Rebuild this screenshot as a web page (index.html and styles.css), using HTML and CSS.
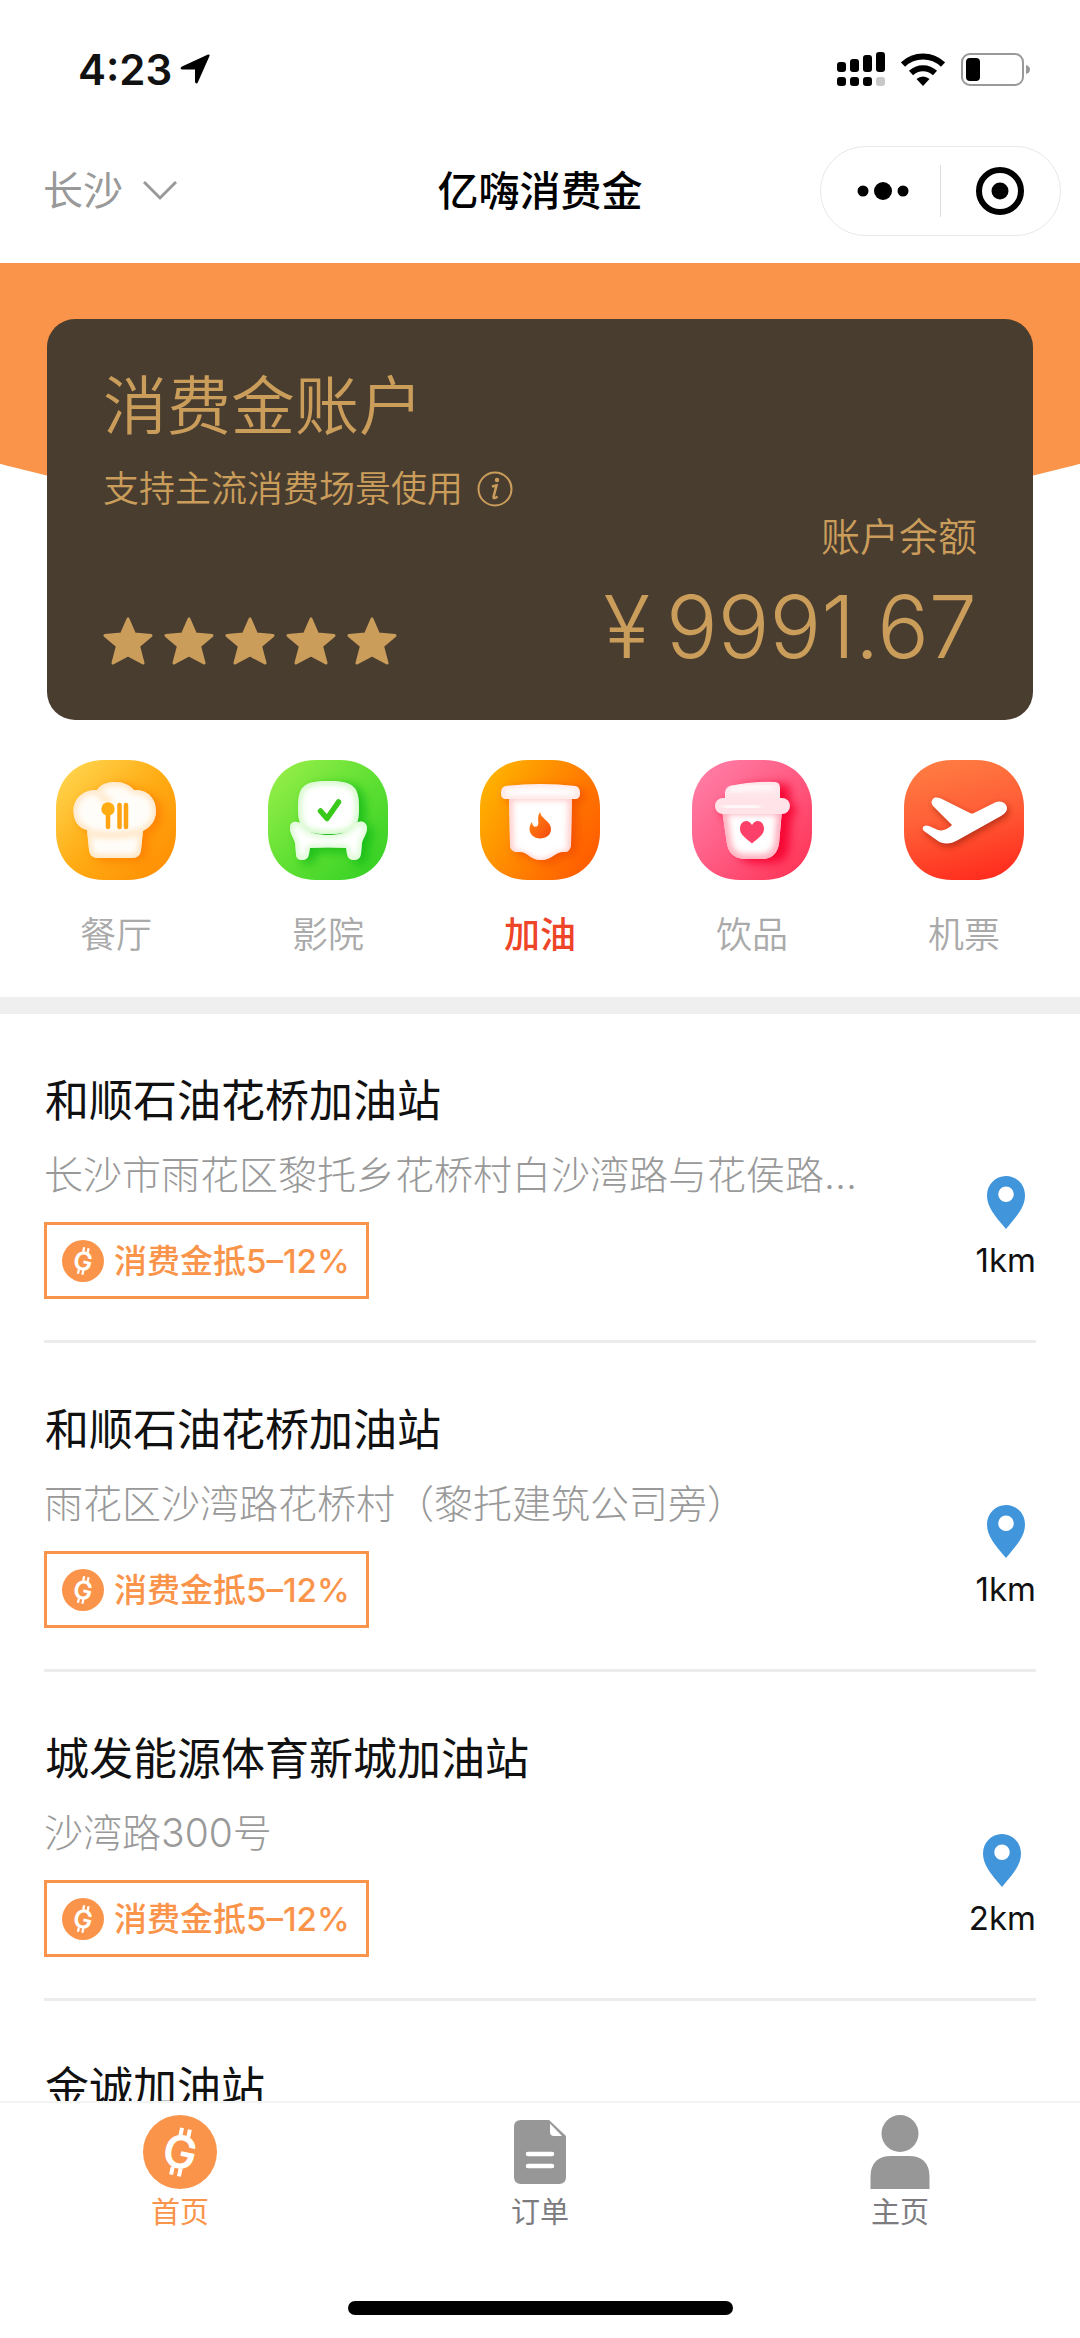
FILE: index.html
```html
<!DOCTYPE html>
<html lang="zh-CN">
<head>
<meta charset="utf-8">
<meta name="viewport" content="width=device-width, initial-scale=1">
<title>亿嗨消费金</title>
<link rel="stylesheet" href="styles.css">
</head>
<body>
<svg class="sprite" aria-hidden="true">
  <defs>
    <symbol id="coin" viewBox="0 0 74 74">
      <circle cx="37" cy="37" r="37" fill="#fa944a"/>
      <g transform="rotate(12 37 37)">
        <text class="coin-letter" x="37" y="53" text-anchor="middle">G</text>
        <path d="M34 13v8M42 13v8M33 53v8M41 53v8" stroke="#fff" stroke-width="4" fill="none"/>
      </g>
    </symbol>
    <symbol id="pin" viewBox="0 0 38 53">
      <path fill="#4095db" fill-rule="evenodd" d="M19 0C8.500 0 0 8.500 0 19.500C0 31 8 40 19 53C30 40 38 31 38 19.500C38 8.500 29.500 0 19 0ZM19 10.500a7.800 7.800 0 1 1 0 15.600a7.800 7.800 0 0 1 0-15.600Z"/>
    </symbol>
    <symbol id="star" viewBox="0 0 50 48">
      <path d="M25 2L31.500 17L48 18.500L35.500 29L40 46L25 38L10 46L14.500 29L2 18.500L18.500 17Z" fill="#cb9d5b" stroke="#cb9d5b" stroke-width="3" stroke-linejoin="round"/>
    </symbol>
    <clipPath id="tile"><path d="M0 48C0 20 20 0 48 0H72C100 0 120 20 120 48V72C120 100 100 120 72 120H48C20 120 0 100 0 72Z"/></clipPath>
    <filter id="soft" x="-30%" y="-30%" width="160%" height="160%"><feGaussianBlur stdDeviation="5"/></filter>
    <filter id="soft-inner" x="-30%" y="-30%" width="160%" height="160%"><feGaussianBlur stdDeviation="3"/></filter>
  </defs>
</svg>

<div class="app">
  <header>
    <div class="status">
      <span class="time">4:23</span>
      <svg class="arrow" viewBox="0 0 30 30"><path d="M28 0.500Q30 0 29.500 2L18 28Q16.500 31 15 28V15.500H2Q-1 14.500 2 12.500Z"/></svg>
      <div class="status-icons">
        <svg width="48" height="34" viewBox="0 0 48 34">
          <rect x="0" y="10" width="9" height="10" rx="3"/><rect x="13" y="7" width="9" height="13" rx="3"/><rect x="26" y="3" width="9" height="17" rx="3"/><rect x="39" y="0" width="9" height="20" rx="3"/>
          <rect x="0" y="25" width="9" height="9" rx="3"/><rect x="13" y="25" width="9" height="9" rx="3"/><rect x="26" y="25" width="9" height="9" rx="3"/><rect x="39" y="25" width="9" height="9" rx="3" fill="#c8c8c8"/>
        </svg>
        <svg width="44" height="33" viewBox="0 0 44 33">
          <path d="M2 11.500A29 29 0 0 1 42 11.500M10 20A17.500 17.500 0 0 1 34 20" fill="none" stroke="#000" stroke-width="6"/>
          <path d="M22 33L15.500 26A9.500 9.500 0 0 1 28.500 26Z"/>
        </svg>
        <svg width="69" height="33" viewBox="0 0 69 33">
          <rect x="1" y="1" width="61" height="31" rx="8" fill="none" stroke="#999" stroke-width="2"/>
          <rect x="5" y="5" width="14" height="23" rx="4"/><path d="M65 12Q69 13 69 16.500Q69 20 65 21Z" fill="#999"/>
        </svg>
      </div>
    </div>
    <nav class="nav">
      <button class="city" type="button">长沙
        <svg width="34" height="20" viewBox="0 0 34 20"><path d="M1 1L17 17L33 1" fill="none" stroke="#999" stroke-width="3"/></svg>
      </button>
      <h1 class="title">亿嗨消费金</h1>
      <div class="capsule">
        <button type="button" aria-label="更多"><svg width="52" height="18" viewBox="0 0 52 18"><circle cx="6" cy="9" r="5.500"/><circle cx="26" cy="9" r="9"/><circle cx="46" cy="9" r="5.500"/></svg></button>
        <button type="button" aria-label="关闭"><svg width="48" height="48" viewBox="0 0 48 48"><circle cx="24" cy="24" r="21" fill="none" stroke="#000" stroke-width="6"/><circle cx="24" cy="24" r="8.500"/></svg></button>
      </div>
    </nav>
  </header>

  <section class="hero">
    <div class="card">
      <h2 class="card-title">消费金账户</h2>
      <p class="card-sub">支持主流消费场景使用
        <svg width="36" height="36" viewBox="0 0 36 36"><circle cx="18" cy="18" r="16.500" fill="none" stroke="#cb9d5b" stroke-width="2"/><circle cx="20" cy="9" r="2.200" fill="#cb9d5b"/><path d="M15 15.500L19.500 14.500L16.500 26Q16.500 28.500 20.500 25.500" fill="none" stroke="#cb9d5b" stroke-width="2.500"/></svg>
      </p>
      <div class="card-row">
        <div class="stars">
          <svg><use href="#star"/></svg><svg><use href="#star"/></svg><svg><use href="#star"/></svg><svg><use href="#star"/></svg><svg><use href="#star"/></svg>
        </div>
        <div class="balance">
          <p class="balance-label">账户余额</p>
          <p class="amount"><span>¥</span><span>9991.67</span></p>
        </div>
      </div>
    </div>
  </section>

  <nav class="services">
    <a href="#food">
      <svg viewBox="0 0 120 120">
        <defs>
          <linearGradient id="g1" x1="0" y1="0" x2="1" y2="1"><stop offset="0" stop-color="#ffdb57"/><stop offset=".5" stop-color="#ffac14"/><stop offset="1" stop-color="#ff8a00"/></linearGradient>
          <path id="hat" d="M31 70C22 68 17.500 60 17.500 51C17.500 38 28 29.500 41 30C45 24 52 22 59 22C67 22 74 25 78 30C91 29 100 38 100 51C100 60 95 67 87 71L85 90Q84 98 76 98H42Q34 98 33 90Z"/>
          <clipPath id="hat-clip"><use href="#hat"/></clipPath>
        </defs>
        <g clip-path="url(#tile)">
          <rect width="120" height="120" fill="url(#g1)"/>
          <use href="#hat" x="6" y="3" fill="#ff7d00" filter="url(#soft)" opacity=".8"/>
          <use href="#hat" fill="#fffdf9"/>
          <g clip-path="url(#hat-clip)"><use href="#hat" fill="none" stroke="#ffdcae" stroke-width="5" filter="url(#soft-inner)"/><path d="M34 73Q59 78 85 72M43 32Q48 42 55 40" fill="none" stroke="#ffdfb6" stroke-width="5" filter="url(#soft-inner)"/></g>
          <path d="M52 52V67M63.500 45V67M70 45V67" stroke="#ffa313" stroke-width="4.500" stroke-linecap="round"/><circle cx="52" cy="49" r="6.700" fill="#ffad12"/>
        </g>
      </svg>
      <span>餐厅</span>
    </a>
    <a href="#cinema">
      <svg viewBox="0 0 120 120">
        <defs>
          <linearGradient id="g2" x1="0" y1="0" x2="1" y2="1"><stop offset="0" stop-color="#9df04a"/><stop offset=".5" stop-color="#61e034"/><stop offset="1" stop-color="#30ce22"/></linearGradient>
          <path id="back" d="M30 48C30 27 35 21 60 21C86 21 91 27 91 48C91 68 86 74 60 74C35 74 30 68 30 48Z"/>
          <path id="seat" d="M22 68C22 60 31 60 36 67C40 73 50 75 60.500 75C71 75 81 73 86 65C91 59 99 61 99 68C99 74 95 78 94 83L93 94Q92 100 86 100Q80 100 79 94L78 88Q60 87 42 88L41 94Q40 100 34 100Q28 100 28 94L27 83C26 78 22 74 22 68Z"/>
          <clipPath id="seat-clip"><use href="#seat"/></clipPath><clipPath id="back-clip"><use href="#back"/></clipPath>
        </defs>
        <g clip-path="url(#tile)">
          <rect width="120" height="120" fill="url(#g2)"/>
          <g filter="url(#soft)" fill="#0fb812" opacity=".8"><use href="#back" x="6" y="3"/><use href="#seat" x="6" y="4"/></g>
          <use href="#back" fill="#fff"/><g clip-path="url(#back-clip)"><use href="#back" fill="none" stroke="#b6f4a4" stroke-width="4" filter="url(#soft-inner)"/></g>
          <use href="#seat" fill="#fff"/><g clip-path="url(#seat-clip)"><use href="#seat" fill="none" stroke="#b6f4a4" stroke-width="3" filter="url(#soft-inner)"/></g>
          <path d="M52.500 51L59 58.500L70.500 42" fill="none" stroke="#38c91b" stroke-width="5.500" stroke-linecap="round" stroke-linejoin="round"/>
        </g>
      </svg>
      <span>影院</span>
    </a>
    <a href="#fuel" class="active" aria-current="true">
      <svg viewBox="0 0 120 120">
        <defs>
          <linearGradient id="g3" x1="0" y1=".2" x2="1" y2=".8"><stop offset="0" stop-color="#ffb300"/><stop offset=".55" stop-color="#ff8100"/><stop offset="1" stop-color="#ff5a00"/></linearGradient>
          <linearGradient id="flame" x1="0" y1="0" x2="1" y2="1"><stop offset="0" stop-color="#ff8a12"/><stop offset="1" stop-color="#f6480d"/></linearGradient>
          <path id="banner" d="M29 34H92L91 85Q90 93 83 92C75 92 72 100 61 100C50 100 48 92 40 92Q30 93 30 85Z"/>
          <path id="bar" d="M26 26Q60 22 95 26Q100 27 100 33Q100 39 95 39H26Q21 39 21 33Q21 27 26 26Z"/>
          <clipPath id="banner-clip"><use href="#banner"/></clipPath><clipPath id="bar-clip"><use href="#bar"/></clipPath>
        </defs>
        <g clip-path="url(#tile)">
          <rect width="120" height="120" fill="url(#g3)"/>
          <g filter="url(#soft)" fill="#f04a00" opacity=".75"><use href="#banner" x="6" y="3"/><use href="#bar" x="5" y="3"/></g>
          <use href="#banner" fill="#fff"/><g clip-path="url(#banner-clip)"><use href="#banner" y="3" fill="none" stroke="#ffc3c0" stroke-width="6" filter="url(#soft-inner)"/></g>
          <use href="#bar" fill="#fff"/><g clip-path="url(#bar-clip)"><use href="#bar" fill="none" stroke="#ffc9c6" stroke-width="3" filter="url(#soft-inner)"/></g>
          <path d="M60 52C61 59 71 61 71 69C71 75 66 78.500 60 78.500C54 78.500 49.500 74 49.500 69C49.500 66 51 63 52 62C52 66 55 68 57.500 66C60 63 56 58 60 52Z" fill="url(#flame)"/>
        </g>
      </svg>
      <span>加油</span>
    </a>
    <a href="#drinks">
      <svg viewBox="0 0 120 120">
        <defs>
          <linearGradient id="g4" x1="0" y1="0" x2="1" y2="1"><stop offset="0" stop-color="#ff83ab"/><stop offset=".5" stop-color="#ff5b83"/><stop offset="1" stop-color="#ff2e50"/></linearGradient>
          <path id="cup" d="M30 50H90L87 84Q84 99 70 99H54Q38 99 35 84Z"/>
          <path id="lid" d="M33 42V33Q33 28 38 26Q60 21 83 22Q88 22 88 28V42Z"/>
          <rect id="rim" x="23" y="38" width="75" height="16" rx="8"/>
          <clipPath id="cup-clip"><use href="#cup"/></clipPath>
        </defs>
        <g clip-path="url(#tile)">
          <rect width="120" height="120" fill="url(#g4)"/>
          <g filter="url(#soft)" fill="#f6002d" opacity=".9"><use href="#lid" x="10" y="2"/><use href="#rim" x="6" y="4"/><use href="#cup" x="10" y="4"/></g>
          <use href="#cup" fill="#fff"/><g clip-path="url(#cup-clip)"><use href="#cup" fill="none" stroke="#ffabba" stroke-width="9" filter="url(#soft-inner)"/></g>
          <use href="#lid" fill="#ffe6eb"/><path d="M38 31Q60 25 82 27" stroke="#fff" stroke-width="5" fill="none" filter="url(#soft-inner)"/>
          <use href="#rim" fill="#ffe3e9"/><path d="M31 46Q50 48 68 46" fill="none" stroke="#fff" stroke-width="7" filter="url(#soft-inner)"/>
          <path d="M60 65C56 58 48 61 48 69C48 75 55 79 60 83.500C65 79 72 75 72 69C72 61 64 58 60 65Z" fill="#fc4069"/>
        </g>
      </svg>
      <span>饮品</span>
    </a>
    <a href="#flights">
      <svg viewBox="0 0 120 120">
        <defs>
          <linearGradient id="g5" x1=".35" y1="0" x2=".6" y2="1"><stop offset="0" stop-color="#ff7b42"/><stop offset=".45" stop-color="#ff5f37"/><stop offset="1" stop-color="#ff2d1e"/></linearGradient>
          <path id="plane" d="M29 39C31 36 36 38 38 39L66 53Q68 54 70 53L92 42C98 40 103 44 103 48C103 52 100 54 97 56L54 80C46 85 38 84 34 81L20 71C17 68 20 64 25 66L34 70Q41 72 48 65L30 47C27 44 27 41 29 39Z"/>
        </defs>
        <g clip-path="url(#tile)">
          <rect width="120" height="120" fill="url(#g5)"/>
          <use href="#plane" x="2" y="3" fill="#97200d" filter="url(#soft-inner)" opacity=".65"/>
          <use href="#plane" fill="#fff"/>
        </g>
      </svg>
      <span>机票</span>
    </a>
  </nav>

  <main class="list">
    <article class="item">
      <div class="info">
        <h3>和顺石油花桥加油站</h3>
        <p class="address">长沙市雨花区黎托乡花桥村白沙湾路与花侯路…</p>
        <span class="tag"><svg><use href="#coin"/></svg>消费金抵5–12%</span>
      </div>
      <div class="distance"><svg><use href="#pin"/></svg>1km</div>
    </article>
    <article class="item">
      <div class="info">
        <h3>和顺石油花桥加油站</h3>
        <p class="address">雨花区沙湾路花桥村（黎托建筑公司旁）</p>
        <span class="tag"><svg><use href="#coin"/></svg>消费金抵5–12%</span>
      </div>
      <div class="distance"><svg><use href="#pin"/></svg>1km</div>
    </article>
    <article class="item">
      <div class="info">
        <h3>城发能源体育新城加油站</h3>
        <p class="address">沙湾路300号</p>
        <span class="tag"><svg><use href="#coin"/></svg>消费金抵5–12%</span>
      </div>
      <div class="distance"><svg><use href="#pin"/></svg>2km</div>
    </article>
    <article class="item">
      <div class="info">
        <h3>金诚加油站</h3>
      </div>
    </article>
  </main>

  <footer class="tabbar">
    <nav class="tabs">
      <a href="#home" class="active" aria-current="page"><svg viewBox="0 0 74 74"><use href="#coin"/></svg>首页</a>
      <a href="#orders"><svg viewBox="0 0 74 74"><path fill="#979797" d="M18 5H46L63 21V62Q63 69 56 69H18Q11 69 11 62V12Q11 5 18 5Z"/><path fill="#fff" d="M47 8.500L59 21H51Q47 21 47 17Z"/><path d="M25 39H49M25 51H49" stroke="#fff" stroke-width="4.500" stroke-linecap="round"/></svg>订单</a>
      <a href="#me"><svg viewBox="0 0 74 74"><g fill="#979797"><circle cx="37" cy="18.500" r="18.500"/><path d="M7.500 74V62Q7.500 41 28.500 41H45.500Q66.500 41 66.500 62V74Z"/></g></svg>主页</a>
    </nav>
    <div class="home-indicator"></div>
  </footer>
</div>
</body>
</html>
```
FILE: styles.css
```css
* { box-sizing: border-box; }

body, h1, h2, h3, p { margin: 0; font-weight: 400; }

body {
  background: #fff;
  color: #111;
  font-family: Inter, "Noto Sans CJK SC", sans-serif;
}

a { color: inherit; text-decoration: none; }

button {
  border: 0;
  padding: 0;
  background: none;
  color: inherit;
  font: inherit;
}

svg { display: block; flex: none; }

.sprite { position: absolute; width: 0; height: 0; }

.coin-letter { font: 600 45px Inter, sans-serif; fill: #fff; }

.app {
  display: flex;
  flex-direction: column;
  height: 100vh;
}

/* status bar */
.status {
  display: flex;
  align-items: center;
  height: 138px;
  padding: 0 50px 0 78px;
}

.time { font-size: 42px; font-weight: 600; }
.arrow { width: 30px; height: 30px; margin-left: 8px; }

.status-icons {
  display: flex;
  align-items: center;
  gap: 16px;
  margin-left: auto;
}

/* navigation */
.nav {
  display: grid;
  grid-template-columns: 1fr auto 1fr;
  align-items: center;
  height: 106px;
  margin-bottom: 19px;
  padding: 0 19px;
}

.city {
  display: flex;
  align-items: center;
  gap: 20px;
  margin-left: 24px;
  color: #999;
  font-size: 40px;
  line-height: 56px;
}

.title {
  color: #000;
  font-size: 41px;
  font-weight: 500;
  line-height: 56px;
}

.capsule {
  display: flex;
  justify-self: end;
  width: 241px;
  height: 90px;
  padding: 18px 0;
  border: 1px solid #e8e8e8;
  border-radius: 45px;
}

.capsule button {
  display: flex;
  width: 50%;
  align-items: center;
  justify-content: center;
}

.capsule button:first-child { padding-left: 6px; border-right: 1px solid #ddd; }

/* account card */
.hero {
  position: relative;
  padding: 56px 47px 0;
}

.hero::before {
  content: "";
  position: absolute;
  inset: 0;
  background: #fa944a;
  clip-path: ellipse(77% 264px at 50% 0);
}

.card {
  position: relative;
  padding: 47px 56px 45px;
  border-radius: 28px;
  background: #493d30;
  color: #cb9d5b;
}

.card-title { font-size: 64px; font-weight: 350; line-height: 80px; }

.card-sub {
  display: flex;
  align-items: center;
  gap: 14px;
  margin-top: 19px;
  font-size: 36px;
  font-weight: 350;
  line-height: 48px;
}

.card-row {
  display: flex;
  align-items: flex-end;
  justify-content: space-between;
}

.stars { display: flex; gap: 11px; padding-bottom: 10px; }
.stars svg { width: 50px; height: 48px; }

.balance { text-align: right; }
.balance-label { font-size: 39px; font-weight: 350; line-height: 48px; }

.amount {
  display: flex;
  gap: 16px;
  justify-content: flex-end;
  margin-top: 18px;
  font-size: 86px;
  font-weight: 350;
  line-height: 96px;
}

/* service shortcuts */
.services {
  display: flex;
  padding: 40px 10px 38px;
  border-bottom: 17px solid #efefef;
}

.services a {
  display: flex;
  flex: 1;
  flex-direction: column;
  align-items: center;
  gap: 31px;
  color: #aaa;
  font-size: 36px;
  font-weight: 350;
  line-height: 48px;
}

.services svg { width: 120px; height: 120px; }
.services .active { color: #ee4428; font-weight: 500; }

/* station list */
.list {
  flex: 1;
  min-height: 0;
  padding: 0 44px;
  overflow-y: auto;
  scrollbar-width: none;
}

.item {
  display: flex;
  gap: 24px;
  padding: 57px 0 41px;
  border-bottom: 3px solid #ececec;
}

.info { flex: 1; min-width: 0; }
.info h3 { padding-left: 1px; font-size: 44px; line-height: 60px; }

.address {
  margin: 16px 0 19px;
  overflow: hidden;
  color: #999;
  font-size: 39px;
  font-weight: 300;
  line-height: 56px;
  text-overflow: ellipsis;
  white-space: nowrap;
}

.tag {
  display: flex;
  align-items: center;
  gap: 10px;
  width: fit-content;
  height: 77px;
  padding: 0 16px 0 15px;
  border: 3px solid #fa944a;
  color: #fa944a;
  font-size: 33px;
  font-weight: 500;
  line-height: 44px;
}

.tag svg { width: 42px; height: 42px; }

.distance {
  display: flex;
  flex-direction: column;
  align-items: center;
  align-self: flex-end;
  gap: 13px;
  padding-bottom: 21px;
  font-size: 33px;
  line-height: 36px;
}

.distance svg { width: 38px; height: 53px; }

/* bottom tabs */
.tabbar {
  padding: 12px 0 23px;
  border-top: 2px solid #f3f3f3;
}

.tabs { display: flex; }

.tabs a {
  display: flex;
  flex: 1;
  flex-direction: column;
  align-items: center;
  gap: 4px;
  color: #7c7c80;
  font-size: 29px;
  line-height: 40px;
}

.tabs svg { width: 74px; height: 74px; }
.tabs .active { color: #fa944a; }

.home-indicator {
  width: 385px;
  height: 14px;
  margin: 68px auto 0;
  border-radius: 7px;
  background: #000;
}
```
